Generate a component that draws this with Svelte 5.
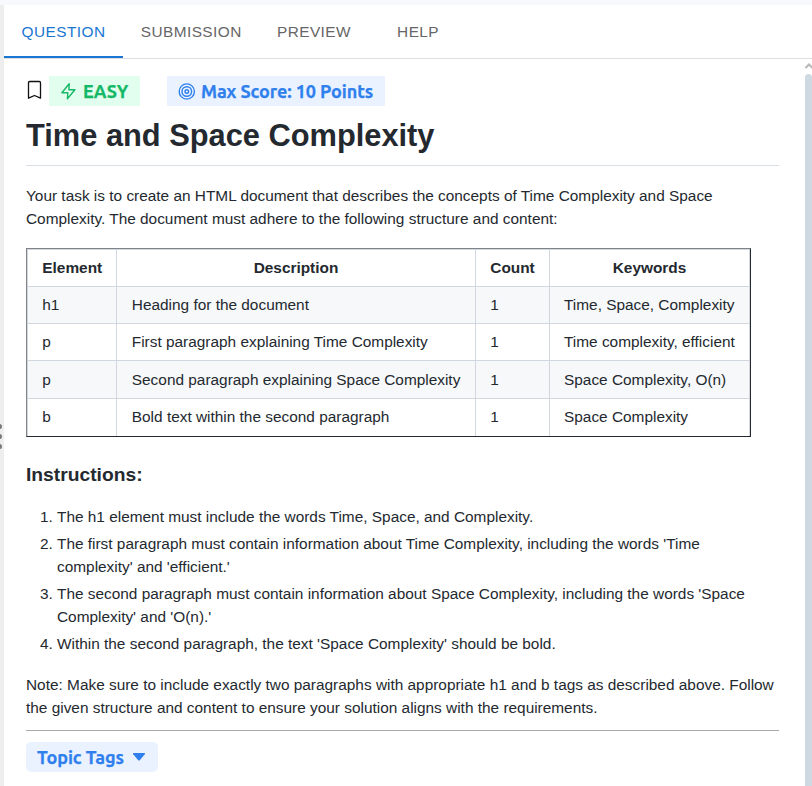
<script>
  const tabs = ['QUESTION', 'SUBMISSION', 'PREVIEW', 'HELP'];
  const columns = ['Element', 'Description', 'Count', 'Keywords'];
  const rows = [
    ['h1', 'Heading for the document', '1', 'Time, Space, Complexity'],
    ['p', 'First paragraph explaining Time Complexity', '1', 'Time complexity, efficient'],
    ['p', 'Second paragraph explaining Space Complexity', '1', 'Space Complexity, O(n)'],
    ['b', 'Bold text within the second paragraph', '1', 'Space Complexity']
  ];
  const steps = [
    'The h1 element must include the words Time, Space, and Complexity.',
    "The first paragraph must contain information about Time Complexity, including the words 'Time complexity' and 'efficient.'",
    "The second paragraph must contain information about Space Complexity, including the words 'Space Complexity' and 'O(n).'",
    "Within the second paragraph, the text 'Space Complexity' should be bold."
  ];
  let active = $state('QUESTION');
</script>

<div class="app">
  <div class="gutter"><i></i><i></i><i></i></div>
  <main>
    <nav>
      {#each tabs as tab}
        <button class:active={tab === active} onclick={() => (active = tab)}>{tab}</button>
      {/each}
    </nav>
    <div class="body">
      <div class="content">
        <div class="badges">
          <svg class="bookmark" width="16" height="20" viewBox="0 0 16 20" fill="none" stroke="#111" stroke-width="1.3" stroke-linejoin="round">
            <path d="M3.700 1.500h9.600q1.200 0 1.200 1.200v15.500L8.500 15.500l-6 2.700V2.700q0-1.200 1.200-1.200z" />
          </svg>
          <span class="badge easy">
            <svg width="16" height="18" viewBox="0 0 16 18" fill="none" stroke="#14b866" stroke-width="1.4" stroke-linejoin="round">
              <path d="M9.200 1.700 1.900 10.700h5.900L7.400 16.800l7.500-9H8.900z" />
            </svg>
            <b class="t-easy">EASY</b>
          </span>
          <span class="badge score">
            <svg width="18" height="18" viewBox="0 0 18 18" fill="none" stroke="#2f80ed" stroke-width="1.400">
              <circle cx="8.800" cy="9.500" r="7.600" /><circle cx="8.800" cy="9.500" r="4.800" /><circle cx="8.800" cy="9.500" r="1.800" />
            </svg>
            <b class="t-score">Max Score: 10 Points</b>
          </span>
        </div>
        <h1>Time and Space Complexity</h1>
        <p class="intro">Your task is to create an HTML document that describes the concepts of Time Complexity and Space Complexity. The document must adhere to the following structure and content:</p>
        <div class="frame">
          <table>
            <colgroup><col class="c1" /><col class="c2" /><col class="c3" /><col class="c4" /></colgroup>
            <thead><tr>{#each columns as c}<th>{c}</th>{/each}</tr></thead>
            <tbody>
              {#each rows as row}
                <tr>{#each row as cell}<td>{cell}</td>{/each}</tr>
              {/each}
            </tbody>
          </table>
        </div>
        <h3>Instructions:</h3>
        <ol>
          {#each steps as step}<li>{step}</li>{/each}
        </ol>
        <p class="note">Note: Make sure to include exactly two paragraphs with appropriate h1 and b tags as described above. Follow the given structure and content to ensure your solution aligns with the requirements.</p>
        <hr />
        <button class="topics">
          <b class="t-topics">Topic Tags</b>
          <svg width="14" height="10" viewBox="0 0 14 10"><path d="M1.500 1h11q1 .3.300 1.200L8 8q-1 1-2 0L1.200 2.200Q.5 1.300 1.500 1z" fill="#2f80ed" /></svg>
        </button>
      </div>
      <div class="scroll">
        <svg width="7" height="6" viewBox="0 0 7 6" fill="none" stroke="#b8b8b8" stroke-width="2"><path d="M.5 5 4 1.500 7.500 5" /></svg>
        <div class="thumb"></div>
      </div>
    </div>
  </main>
</div>

<style>
  :global(body) { margin: 0; background: #f8f9fc; }
  .app {
    box-sizing: border-box; width: 812px; height: 786px; padding-top: 5px; display: flex; overflow: hidden;
    font: 15.4px/23px "Liberation Sans", Arial, sans-serif; color: #24292f;
  }
  .gutter { width: 4px; background: #eee; display: flex; flex-direction: column; align-items: flex-start; gap: 5.800px; padding-top: 418.500px; box-sizing: border-box; overflow: hidden; }
  .gutter i { width: 4px; height: 5px; margin-left: -2px; margin-bottom: -.5px; flex: none; border-radius: 50%; background: #777; }
  main { flex: 1; min-width: 0; background: #fff; display: flex; flex-direction: column; }
  nav { height: 53px; flex: none; display: flex; border-bottom: 1px solid #dedede; }
  nav button {
    box-sizing: border-box; min-width: 99px; height: 53px; padding: 2px 17.6px 0; border: 0; border-bottom: 2px solid transparent; background: none;
    font: 15.4px/20px "Liberation Sans", Arial, sans-serif; letter-spacing: .44px; color: #666;
  }
  nav button.active { color: #1976d2; border-bottom-color: #1976d2; }
  .body { flex: 1; min-height: 0; display: flex; justify-content: space-between; }
  .content { width: 753px; margin-left: 22px; }
  .badges { display: flex; align-items: center; height: 30px; margin-top: 17px; }
  .bookmark { margin: 0 7px 0 0; position: relative; top: -1px; }
  .badge { box-sizing: border-box; height: 30px; display: flex; align-items: center; }
  .easy { width: 91px; background: #e2feee; color: #14b866; padding-left: 11px; gap: 7px; }
  .score { width: 218px; margin-left: 27px; background: #eaf2ff; color: #2f80ed; padding-left: 11px; gap: 5px; }
  .badge b, .topics b { font: 700 18px/30px Ubuntu, "Noto Sans", sans-serif; letter-spacing: -.09px; white-space: nowrap; -webkit-text-stroke: .25px currentColor; }
  .badge .t-easy { letter-spacing: 0; }
  h1 { margin: 10px 0 0; height: 49px; font-size: 30.8px; line-height: 40px; border-bottom: 1px solid #d8dee4; }
  p { margin: 0; }
  .intro { margin-top: 18px; }
  .frame { box-sizing: border-box; width: 725px; height: 189px; margin-top: 18px; border: 1px solid; border-color: #808488 #24292f #24292f #808488; overflow: hidden; }
  table { width: 723px; height: 187px; border-collapse: collapse; table-layout: fixed; }
  .c1 { width: 89px; } .c2 { width: 359px; } .c3 { width: 74px; }
  th, td { box-sizing: border-box; height: 37px; padding: 0 14.300px 1px; border: 1px solid #d0d7de; line-height: 23px; white-space: nowrap; text-align: left; }
  th { height: 37px; text-align: center; }
  tbody tr:nth-child(3) td { height: 38px; }
  tbody tr:nth-child(4) td { height: 37.500px; }
  td:nth-child(2) { padding-left: 14.800px; }
  td:nth-child(4) { padding-left: 14px; }
  tbody tr:nth-child(odd) { background: #f6f8fa; }
  h3 { margin: 26px 0 0; font-size: 19.250px; line-height: 24px; }
  ol { margin: 18px 0 0; padding-left: 31px; }
  li + li { margin-top: 4px; }
  .note { margin-top: 18px; }
  hr { height: 1px; margin: 11px 0; border: 0; background: #a8a8a8; }
  .topics { width: 132px; height: 30px; padding: 0 0 0 11px; border: 0; border-radius: 5px; background: #eaf2ff; color: #2f80ed; display: flex; align-items: center; gap: 8px; }
  .scroll { width: 7px; background: #fff; display: flex; flex-direction: column; padding-top: 4px; box-sizing: border-box; }
  .thumb { flex: 1; margin-top: 5px; border-radius: 4px 4px 0 0; background: #cfd9e2; }
</style>
